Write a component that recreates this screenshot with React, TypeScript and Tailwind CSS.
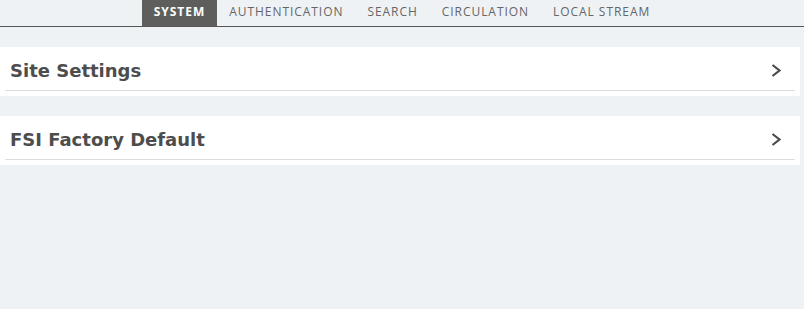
const tabs = ["System", "Authentication", "Search", "Circulation", "Local Stream"];

const sections = ["Site Settings", "FSI Factory Default"];

function Chevron() {
  return (
    <svg width="11" height="13" viewBox="0 0 11 13" fill="none" className="text-[#4a4a4a]">
      <polyline points="1.5,1 8.5,6.5 1.5,12" stroke="currentColor" strokeWidth="2.2" />
    </svg>
  );
}

export default function App() {
  const active = 0;

  return (
    <div className="min-h-[309px] w-full bg-[#eff2f5] font-['Open_Sans',sans-serif] text-[#4d4d4d]">
      {/* Tabs */}
      <div className="flex h-[27px] justify-center border-b border-[#555]">
        {tabs.map((tab, index) => (
          <div
            key={tab}
            className={`flex items-center px-3 pb-[2px] text-[12px] uppercase tracking-[0.95px] ${
              index === active ? "bg-[#5e5f5d] font-bold tracking-[0.7px] text-white" : "text-[#666]"
            }`}
          >
            {tab}
          </div>
        ))}
      </div>

      {/* Sections */}
      <div className="flex flex-col gap-5 pt-[20px] pr-1">
        {sections.map((title) => (
          <div key={title} className="bg-white px-[5px] pb-[5px]">
            <div className="flex h-[44px] items-center justify-between border-b border-[#dcdcdc] pt-[3px] pl-[5px] pr-[13px]">
              <h2 className="font-['DejaVu_Sans',sans-serif] text-[18px] font-bold text-[#4d4d4d]">{title}</h2>
              <Chevron />
            </div>
          </div>
        ))}
      </div>
    </div>
  );
}
